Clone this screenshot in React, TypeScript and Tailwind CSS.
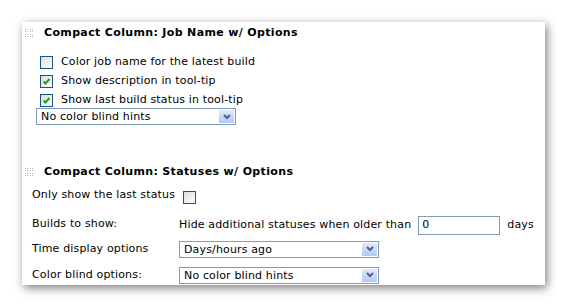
import React from "react";

function Grip() {
  return (
    <div className="grid grid-cols-4 gap-px w-[8px] h-[8px] shrink-0">
      {Array.from({ length: 16 }).map((_, i) => (
        <div key={i} className="w-[1px] h-[1px] bg-[#b8b8b8]" />
      ))}
    </div>
  );
}

function CheckBox({ checked }: { checked?: boolean }) {
  return (
    <div className="w-[13px] h-[13px] border border-[#1c5180] bg-gradient-to-br from-[#dcdcd7] to-white flex items-center justify-center shrink-0">
      {checked && (
        <svg width="9" height="9" viewBox="0 0 9 9">
          <path d="M1.5 4.5 L3.5 6.5 L7.5 2" stroke="#21a121" strokeWidth="2" fill="none" />
        </svg>
      )}
    </div>
  );
}

function Select({ value, width }: { value: string; width: string }) {
  return (
    <div className={`${width} h-[17px] border border-[#7f9db9] bg-white flex items-center justify-between pl-[4px] pr-px`}>
      <span className="leading-none">{value}</span>
      <div className="w-[15px] h-[13px] bg-gradient-to-b from-[#e1eafe] to-[#b4c8f6] flex items-center justify-center">
        <svg width="8" height="6" viewBox="0 0 8 6">
          <path d="M1 1 L4 4 L7 1" stroke="#4d6185" strokeWidth="2" fill="none" />
        </svg>
      </div>
    </div>
  );
}

function SectionTitle({ text }: { text: string }) {
  return (
    <div className="flex items-center h-[14px]">
      <div className="w-[22px] pl-[3px]">
        <Grip />
      </div>
      <span className="font-bold text-[11px] tracking-[0.35px]">{text}</span>
    </div>
  );
}

export default function App() {
  return (
    <div className="w-[567px] h-[308px] bg-white p-[22px] text-[11px] text-black tracking-[0.15px]" style={{ fontFamily: '"DejaVu Sans", Verdana, sans-serif' }}>
      <div className="w-[523px] h-[263px] bg-white shadow-[2px_3px_9px_rgba(0,0,0,0.5)] pt-[4px]">
        <SectionTitle text="Compact Column: Job Name w/ Options" />

        {/* job name options */}
        <div className="pl-[18px] pt-[16px] flex flex-col gap-[6px]">
          {[
            { label: "Color job name for the latest build", checked: false },
            { label: "Show description in tool-tip", checked: true },
            { label: "Show last build status in tool-tip", checked: true },
          ].map((o) => (
            <div key={o.label} className="flex items-center gap-[8px] h-[13px]">
              <CheckBox checked={o.checked} />
              <span>{o.label}</span>
            </div>
          ))}
        </div>
        <div className="pl-[14px] pt-px">
          <Select value="No color blind hints" width="w-[200px]" />
        </div>

        <div className="pt-[40px]">
          <SectionTitle text="Compact Column: Statuses w/ Options" />
        </div>

        {/* statuses options */}
        <div className="pl-[10px] pt-[6px] flex flex-col">
          <div className="flex items-center h-[20px]">
            <span>Only show the last status</span>
            <div className="pl-[8px] pt-[4px]">
              <CheckBox />
            </div>
          </div>
          <div className="flex items-center h-[22px] mt-[8px]">
            <span className="w-[147px]">Builds to show:</span>
            <span className="pt-[3px]">Hide additional statuses when older than</span>
            <div className="ml-[7px] w-[82px] h-[19px] border border-[#7f9db9] flex items-center pl-[3px] mt-[3px]">0</div>
            <span className="ml-[7px] pt-[3px]">days</span>
          </div>
          <div className="flex items-center h-[18px] mt-[5px]">
            <span className="w-[147px]">Time display options</span>
            <Select value="Days/hours ago" width="w-[200px]" />
          </div>
          <div className="flex items-center h-[18px] mt-[8px]">
            <span className="w-[147px]">Color blind options:</span>
            <Select value="No color blind hints" width="w-[200px]" />
          </div>
        </div>
      </div>
    </div>
  );
}
